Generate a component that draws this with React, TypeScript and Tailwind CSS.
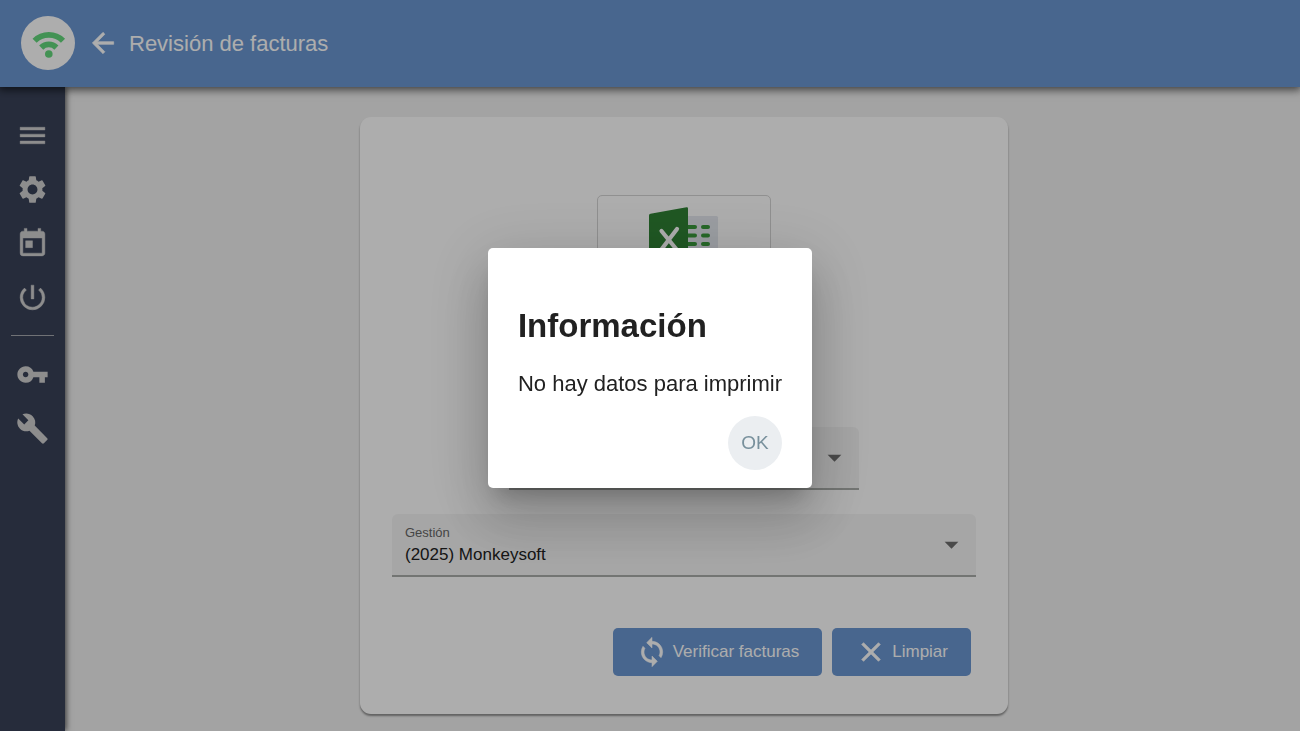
import React, { useState } from "react";
import {
  MdArrowBack,
  MdArrowDropDown,
  MdBuild,
  MdClose,
  MdMenu,
  MdPowerSettingsNew,
  MdSettings,
  MdSync,
  MdToday,
  MdVpnKey,
} from "react-icons/md";

const SideButton = ({
  label,
  children,
}: {
  label: string;
  children: React.ReactNode;
}) => (
  <button
    type="button"
    aria-label={label}
    className="flex h-[54px] w-full items-center justify-center text-[33px] text-[#d0d0d0]"
  >
    {children}
  </button>
);

const SelectField = ({
  id,
  label,
  options,
  className,
}: {
  id: string;
  label: string;
  options: string[];
  className: string;
}) => (
  <div className={className}>
    <div className="relative rounded-t-md border-b-2 border-[#aaadaa] bg-[#f5f5f5]">
      <label
        htmlFor={id}
        className="absolute left-[13px] top-[11px] text-[13px] leading-4 text-[#666666]"
      >
        {label}
      </label>
      <select
        id={id}
        className="block h-[61px] w-full appearance-none bg-transparent pl-[13px] pr-12 pt-5 text-[17px] text-[#212121]"
      >
        {options.map((option) => (
          <option key={option}>{option}</option>
        ))}
      </select>
      <MdArrowDropDown className="pointer-events-none absolute right-2 top-[14px] text-[33px] text-[#6e6e6e]" />
    </div>
  </div>
);

const ActionButton = ({
  icon,
  children,
}: {
  icon: React.ReactNode;
  children: React.ReactNode;
}) => (
  <button
    type="button"
    className="flex h-12 items-center gap-[5px] rounded-[5px] bg-[#6b97d2] px-[23px] text-[17px] text-white"
  >
    <span className="text-[32px]">{icon}</span>
    {children}
  </button>
);

const WifiLogo = () => (
  <svg viewBox="0 0 54 54" className="size-[54px]" aria-hidden="true">
    <circle cx="27" cy="27" r="27" fill="#ffffff" />
    <g fill="none" stroke="#64d87d" strokeWidth="5.8">
      <path d="M13.6 24.8a20 20 0 0 1 28.4 0" />
      <path d="M20.2 31.6a10.8 10.8 0 0 1 15.2 0" />
    </g>
    <circle cx="27.8" cy="38" r="3.8" fill="#64d87d" />
  </svg>
);

const ExcelIcon = () => (
  <svg viewBox="0 0 70 80" className="h-20 w-[70px]" aria-hidden="true">
    <rect x="36" y="9" width="33" height="62" rx="1.5" fill="#e4e8ef" />
    <g fill="#38993b">
      {[18, 26.5, 35, 43.5, 52, 60.5].map((y) => (
        <g key={y}>
          <rect x="34" y={y} width="14" height="4" rx="2" />
          <rect x="52" y={y} width="9" height="4" rx="2" />
        </g>
      ))}
    </g>
    <path d="M0 8.5Q0 7 1.5 6.7L37.5 0.3Q39 0 39 1.5V78.5Q39 80 37.5 79.7L1.5 73.3Q0 73 0 71.5Z" fill="#2f8134" />
    <path d="M12.5 24L28 43M28 22L12 43" stroke="#ffffff" strokeWidth="4.2" strokeLinecap="round" />
  </svg>
);

const App = () => {
  const [open, setOpen] = useState(true);

  // the material icons carry an unfilled 24x24 path that must not be stroked
  return (
    <div className="flex min-h-screen flex-col bg-[#f0f0f0] font-['Liberation_Sans',Arial,sans-serif] [&_path[fill=none]]:stroke-none">
      <header className="relative z-10 flex h-[87px] items-center bg-[#6b97d2] pb-px pl-[21px] text-white shadow-[0_2px_8px_1px_rgba(0,0,0,0.6)]">
        <WifiLogo />
        <button type="button" aria-label="Volver" className="ml-3 text-[32px]">
          <MdArrowBack className="stroke-[0.5]" />
        </button>
        <h1 className="ml-[10px] text-[22px]">Revisión de facturas</h1>
      </header>

      <div className="flex flex-1">
        <nav className="w-[65px] shrink-0 bg-[#394258] pt-[21px] shadow-[1px_0_6px_rgba(0,0,0,0.7)]">
          <SideButton label="Menú">
            <MdMenu className="stroke-[0.3]" />
          </SideButton>
          <SideButton label="Configuración">
            <MdSettings />
          </SideButton>
          <SideButton label="Calendario">
            <MdToday className="stroke-[0.3]" />
          </SideButton>
          <SideButton label="Salir">
            <MdPowerSettingsNew className="stroke-[0.3]" />
          </SideButton>
          <hr className="mx-[11px] my-[11px] border-[#a5a8af]" />
          <SideButton label="Contraseña">
            <MdVpnKey />
          </SideButton>
          <SideButton label="Herramientas">
            <MdBuild />
          </SideButton>
        </nav>

        <main className="flex-1 pb-4 pl-[19px] pr-4 pt-[30px]">
          <section className="mx-auto flex max-w-[648px] flex-col items-center rounded-[11px] bg-white px-8 pb-[38px] pt-[78px] shadow-[0_2px_2px_rgba(0,0,0,0.4)]">
            <button
              type="button"
              aria-label="Subir archivo Excel"
              className="flex h-[174px] w-[174px] items-start justify-center rounded-[5px] border border-[#d4d4d4] pt-[11px]"
            >
              <ExcelIcon />
            </button>
            <SelectField id="tipo" label="Tipo" options={[""]} className="mt-[58px] w-[350px]" />
            <SelectField
              id="gestion"
              label="Gestión"
              options={["(2025) Monkeysoft"]}
              className="mt-6 w-full"
            />
            <div className="mt-[51px] flex gap-[10px] self-end pr-[5px]">
              <ActionButton icon={<MdSync className="stroke-[0.4]" />}>
                Verificar facturas
              </ActionButton>
              <ActionButton icon={<MdClose className="stroke-[0.5]" />}>
                Limpiar
              </ActionButton>
            </div>
          </section>
        </main>
      </div>

      {open && (
        <div className="fixed inset-0 z-20 flex items-center justify-center bg-black/32 pt-[5px]">
          <div
            role="dialog"
            aria-modal="true"
            aria-labelledby="dialog-title"
            className="flex flex-col rounded-[5px] bg-white px-[30px] pb-[18px] pt-[54px] text-[#212121] shadow-[0_15px_20px_-9px_rgba(0,0,0,0.2),0_32px_51px_4px_rgba(0,0,0,0.14),0_12px_62px_11px_rgba(0,0,0,0.12)]"
          >
            <h2 id="dialog-title" className="text-[33px] font-bold leading-[48px]">
              Información
            </h2>
            <p className="mt-5 text-[22px] leading-7">No hay datos para imprimir</p>
            <button
              type="button"
              onClick={() => setOpen(false)}
              className="mt-[18px] size-[54px] self-end rounded-full bg-[#ebeef1] text-[19px] text-[#78909c]"
            >
              OK
            </button>
          </div>
        </div>
      )}
    </div>
  );
};

export default App;
